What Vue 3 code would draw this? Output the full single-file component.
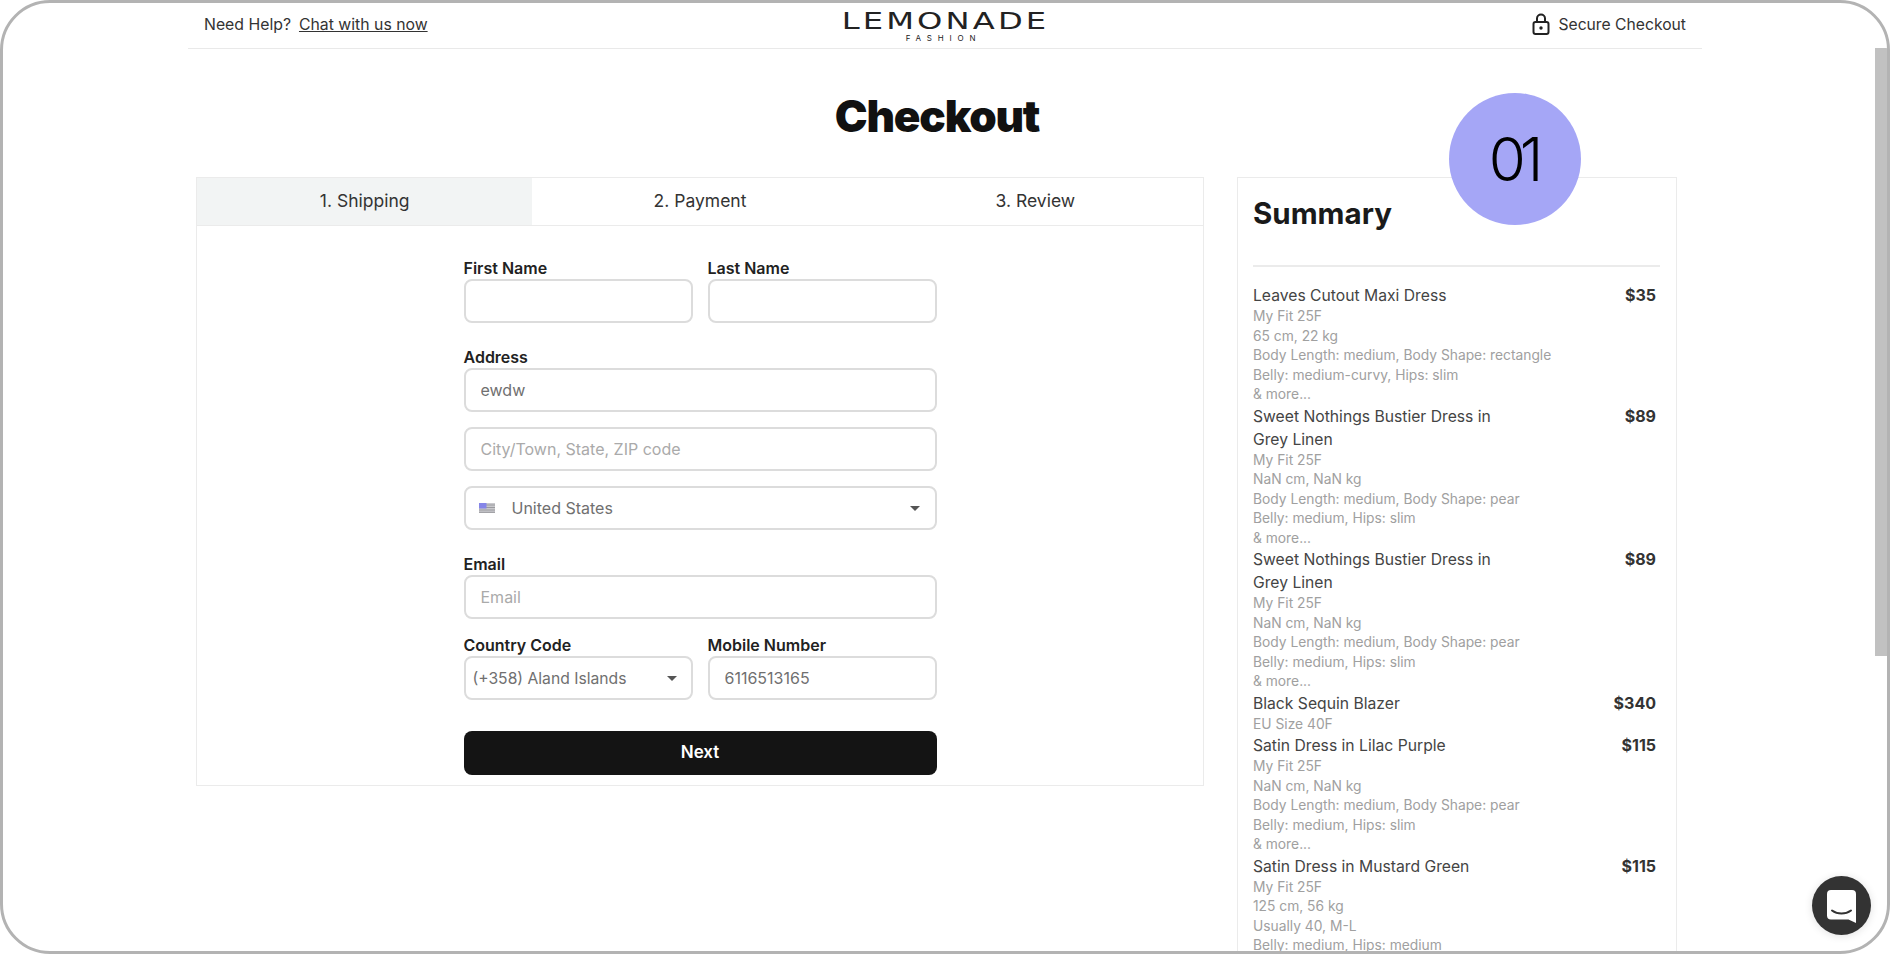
<script setup>
const tabs = ['1. Shipping', '2. Payment', '3. Review']

const fit = ['My Fit 25F']
const pear = ['My Fit 25F', 'NaN cm, NaN kg', 'Body Length: medium, Body Shape: pear', 'Belly: medium, Hips: slim', '& more...']

const items = [
  {
    name: 'Leaves Cutout Maxi Dress',
    price: '$35',
    details: [...fit, '65 cm, 22 kg', 'Body Length: medium, Body Shape: rectangle', 'Belly: medium-curvy, Hips: slim', '& more...']
  },
  { name: 'Sweet Nothings Bustier Dress in Grey Linen', price: '$89', details: pear },
  { name: 'Sweet Nothings Bustier Dress in Grey Linen', price: '$89', details: pear },
  { name: 'Black Sequin Blazer', price: '$340', details: ['EU Size 40F'] },
  { name: 'Satin Dress in Lilac Purple', price: '$115', details: pear },
  {
    name: 'Satin Dress in Mustard Green',
    price: '$115',
    details: [...fit, '125 cm, 56 kg', 'Usually 40, M-L', 'Belly: medium, Hips: medium', '& more...']
  }
]
</script>

<template>
  <div class="frame">
    <header class="topbar">
      <div class="help">
        <span>Need Help?</span>
        <a class="chat-link">Chat with us now</a>
      </div>
      <div class="logo">
        <div class="logo-main">LEMONADE</div>
        <div class="logo-sub">FASHION</div>
      </div>
      <div class="secure">
        <svg width="18" height="22" viewBox="0 0 18 22" fill="none">
          <path d="M5 9.500V5.500a4 4 0 0 1 8 0v4" stroke="#222" stroke-width="2" />
          <rect x="1.500" y="9" width="15" height="12" rx="2" stroke="#222" stroke-width="2" />
          <circle cx="9" cy="15" r="1.700" fill="#222" />
        </svg>
        <span>Secure Checkout</span>
      </div>
    </header>

    <h1 class="title">Checkout</h1>

    <main class="content">
      <section class="form-card">
        <div class="tabs">
          <div v-for="(tab, i) in tabs" :key="tab" class="tab" :class="{ active: i === 0 }">{{ tab }}</div>
        </div>

        <form class="form" @submit.prevent>
          <div class="row">
            <label class="field">
              <span class="label">First Name</span>
              <input class="input" type="text" />
            </label>
            <label class="field">
              <span class="label">Last Name</span>
              <input class="input" type="text" />
            </label>
          </div>

          <label class="field section">
            <span class="label">Address</span>
            <input class="input" type="text" value="ewdw" />
          </label>
          <input class="input stacked" type="text" placeholder="City/Town, State, ZIP code" />
          <div class="input select stacked">
            <svg class="flag" width="16" height="10" viewBox="0 0 16 10">
              <rect width="16" height="10" fill="#c9c9cd" />
              <path d="M0 2h16M0 4.500h16M0 7h16M0 9.300h16" stroke="#9a9a9e" stroke-width="1" />
              <rect width="7.500" height="5.500" fill="#8585e8" />
            </svg>
            <span class="select-text">United States</span>
            <span class="caret"></span>
          </div>

          <label class="field section">
            <span class="label">Email</span>
            <input class="input" type="text" placeholder="Email" />
          </label>

          <div class="row phone">
            <div class="field">
              <span class="label">Country Code</span>
              <div class="input select code">
                <span>(+358) Aland Islands</span>
                <span class="caret"></span>
              </div>
            </div>
            <label class="field">
              <span class="label">Mobile Number</span>
              <input class="input" type="text" value="6116513165" />
            </label>
          </div>

          <button class="next" type="submit">Next</button>
        </form>
      </section>

      <aside class="summary">
        <h2 class="summary-title">Summary</h2>
        <div class="items">
          <div v-for="(item, i) in items" :key="i" class="item">
            <div class="item-head">
              <span class="item-name">{{ item.name }}</span>
              <span class="item-price">{{ item.price }}</span>
            </div>
            <div v-for="line in item.details" :key="line" class="item-detail">{{ line }}</div>
          </div>
        </div>
      </aside>
    </main>

    <div class="badge">01</div>
    <div class="scroll-thumb"></div>
    <div class="chat-button">
      <svg width="29" height="33" viewBox="0 0 29 33">
        <path d="M4 0h21a4 4 0 0 1 4 4v29l-7.500-3.500H4a4 4 0 0 1-4-4V4a4 4 0 0 1 4-4z" fill="#fff" />
        <path d="M5 20.500c5.500 4 13.500 4 19 0" fill="none" stroke="#333" stroke-width="2" stroke-linecap="round" />
      </svg>
    </div>
  </div>
</template>

<style>
html,
body {
  margin: 0;
  background: #fff;
  overflow: hidden;
}
</style>

<style scoped>
.frame {
  position: relative;
  box-sizing: border-box;
  width: 1890px;
  height: 954px;
  border: 3px solid #b3b3b3;
  border-radius: 50px;
  background: #fff;
  overflow: hidden;
  font-family: Inter, "Liberation Sans", sans-serif;
  color: #333;
}

.topbar {
  box-sizing: border-box;
  width: 1514px;
  height: 46px;
  margin: 0 auto;
  padding: 0 16px 3px 16px;
  display: grid;
  grid-template-columns: 1fr auto 1fr;
  align-items: center;
  border-bottom: 1px solid #e9e9e9;
  font-size: 15.800px;
}

.help {
  display: flex;
  gap: 8px;
}

.chat-link {
  text-decoration: underline;
}

.logo {
  text-align: center;
  color: #222;
  width: 203px;
}

.logo-main {
  font-family: "DejaVu Sans", sans-serif;
  font-size: 22.500px;
  line-height: 26px;
  letter-spacing: 2.200px;
  white-space: nowrap;
  transform: scaleX(1.43);
  transform-origin: center;
  margin-top: 2px;
}

.logo-sub {
  font-size: 8px;
  line-height: 9px;
  letter-spacing: 5.800px;
  margin-right: 3px;
}

.secure {
  display: flex;
  justify-content: flex-end;
  align-items: center;
  gap: 8px;
  font-size: 15.700px;
}

.title {
  margin: 0;
  padding: 42px 16px 36px 0;
  text-align: center;
  font-size: 44px;
  line-height: 50px;
  font-weight: 900;
  letter-spacing: -1.200px;
  color: #111;
}

.content {
  box-sizing: border-box;
  width: 1514px;
  margin: 0 auto;
  padding: 0 25px 0 8px;
  display: flex;
  gap: 33px;
  align-items: flex-start;
}

.form-card {
  box-sizing: border-box;
  width: 1008px;
  border: 1px solid #ebebeb;
}

.tabs {
  display: grid;
  grid-template-columns: repeat(3, 1fr);
  height: 47px;
  border-bottom: 1px solid #ebebeb;
}

.tab {
  display: flex;
  align-items: center;
  justify-content: center;
  padding-bottom: 3px;
  font-size: 17.500px;
}

.tab.active {
  background: #f2f4f4;
}

.form {
  width: 473px;
  margin: 0 auto;
  padding: 33px 0 10px;
}

.row {
  display: grid;
  grid-template-columns: 1fr 1fr;
  gap: 15px;
}

.field {
  display: block;
}

.label {
  display: block;
  height: 20px;
  font-size: 16px;
  line-height: 18px;
  font-weight: 600;
  color: #222;
}

.input {
  display: block;
  box-sizing: border-box;
  width: 100%;
  height: 44px;
  padding: 0 15px;
  border: 2px solid #dcdcdc;
  border-radius: 8px;
  outline: none;
  background: #fff;
  font-family: inherit;
  font-size: 16px;
  color: #707070;
}

.input::placeholder {
  color: #aaa;
  opacity: 1;
}

.section {
  margin-top: 25px;
}

.stacked {
  margin-top: 15px;
}

.phone {
  margin-top: 17px;
}

.select {
  display: flex;
  align-items: center;
}

.select.code {
  padding: 0 14px 0 7px;
  justify-content: space-between;
  white-space: nowrap;
  font-size: 15.700px;
}

.flag {
  margin-left: -2px;
  flex-shrink: 0;
}

.select-text {
  margin-left: 17px;
  flex: 1;
}

.caret {
  width: 0;
  height: 0;
  border-left: 5px solid transparent;
  border-right: 5px solid transparent;
  border-top: 5px solid #555;
}

.next {
  display: block;
  width: 100%;
  height: 44px;
  margin-top: 31px;
  padding-bottom: 4px;
  border: 0;
  border-radius: 8px;
  background: #141414;
  color: #fff;
  font-family: inherit;
  font-size: 17px;
  font-weight: 600;
}

.summary {
  box-sizing: border-box;
  width: 440px;
  padding: 0 16px 0 15px;
  border: 1px solid #ebebeb;
  flex-shrink: 0;
}

.summary-title {
  margin: 0;
  height: 89px;
  box-sizing: border-box;
  padding-top: 16px;
  font-size: 29.500px;
  line-height: 38px;
  font-weight: 700;
  color: #1a1a1a;
  border-bottom: 2px solid #ebebeb;
}

.items {
  padding-top: 17px;
}

.item-head {
  display: flex;
  justify-content: space-between;
  padding-right: 4px;
}

.item-name {
  max-width: 270px;
  font-size: 15.700px;
  line-height: 23px;
  color: #444;
}

.item-price {
  font-size: 16px;
  line-height: 23px;
  font-weight: 700;
  color: #333;
}

.item-detail {
  font-size: 13.800px;
  line-height: 19.500px;
  color: #a0a0a0;
}

.badge {
  position: absolute;
  left: 1446px;
  top: 90px;
  box-sizing: border-box;
  width: 132px;
  height: 132px;
  padding-right: 4px;
  border-radius: 50%;
  background: #a5a6f6;
  display: flex;
  align-items: center;
  justify-content: center;
  font-size: 60px;
  font-weight: 350;
  letter-spacing: -6px;
  color: #000;
}

.scroll-thumb {
  position: absolute;
  right: 0;
  top: 45px;
  width: 12px;
  height: 608px;
  background: #c1c1c1;
}

.chat-button {
  position: absolute;
  left: 1809px;
  top: 873px;
  width: 59px;
  height: 59px;
  border-radius: 50%;
  background: #333;
  box-shadow: 0 1px 8px rgba(0, 0, 0, 0.12);
  display: flex;
  align-items: center;
  justify-content: center;
}

.chat-button svg {
  margin-top: 2px;
}
</style>
